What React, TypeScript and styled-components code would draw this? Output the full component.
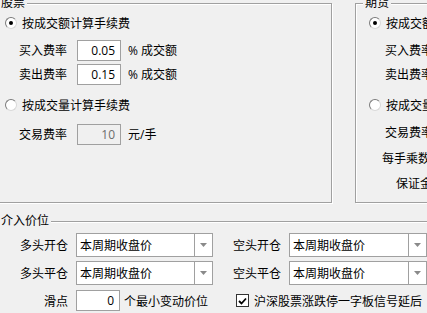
import styled, { createGlobalStyle } from "styled-components";

const GlobalStyle = createGlobalStyle`
  html, body {
    margin: 0;
    padding: 0;
    background: #f0f0f0;
  }
`;

const Page = styled.div`
  width: 427px;
  height: 313px;
  overflow: hidden;
  background: #f0f0f0;
  color: #000;
  font-family: "Open Sans", "Noto Sans CJK SC", sans-serif;
  font-size: 12px;
`;

const TopRow = styled.div`
  display: flex;
  gap: 23px;
  margin: 3px 0 0 -9px;
`;

const Group = styled.section<{ $width: number; $height: number }>`
  position: relative;
  box-sizing: border-box;
  flex-shrink: 0;
  width: ${(p) => p.$width}px;
  height: ${(p) => p.$height}px;
  border: 1px solid #a0a0a0;
  box-shadow: 1px 1px 0 #fff, inset 1px 1px 0 #fff;
`;

const Legend = styled.span`
  position: absolute;
  top: -8px;
  left: 7px;
  padding: 0 2px;
  line-height: 14px;
  background: #f0f0f0;
  white-space: nowrap;
`;

const Stack = styled.div`
  display: flex;
  flex-direction: column;
  padding: 7px 0 0 13px;
`;

const RadioRow = styled.label<{ $top?: number }>`
  display: flex;
  align-items: center;
  gap: 5px;
  height: 24px;
  margin-top: ${(p) => p.$top ?? 0}px;
  white-space: nowrap;
`;

const Radio = styled.span<{ $checked?: boolean }>`
  display: flex;
  align-items: center;
  justify-content: center;
  box-sizing: border-box;
  width: 12px;
  height: 12px;
  flex-shrink: 0;
  border-radius: 50%;
  border: 1px solid;
  border-color: #7a7a7a #d8d8d8 #d8d8d8 #7a7a7a;
  background: #fff;

  &::after {
    content: "";
    display: ${(p) => (p.$checked ? "block" : "none")};
    width: 4px;
    height: 4px;
    border-radius: 50%;
    background: #000;
  }
`;

const FieldRow = styled.div<{ $indent: number; $top?: number }>`
  display: flex;
  align-items: center;
  height: 24px;
  padding-left: ${(p) => p.$indent}px;
  margin-top: ${(p) => p.$top ?? 0}px;
  white-space: nowrap;
`;

const FieldLabel = styled.span`
  margin-right: 10px;
`;

const NumberBox = styled.span<{ $width?: number; $disabled?: boolean }>`
  display: flex;
  align-items: center;
  justify-content: flex-end;
  box-sizing: border-box;
  flex-shrink: 0;
  width: ${(p) => p.$width ?? 44}px;
  height: 21px;
  padding-right: 5px;
  border: 1px solid #a0a0a0;
  background: ${(p) => (p.$disabled ? "#f0f0f0" : "#fff")};
  color: ${(p) => (p.$disabled ? "#6d6d6d" : "#000")};
`;

const Unit = styled.span<{ $gap?: number }>`
  margin-left: ${(p) => p.$gap ?? 7}px;
  white-space: nowrap;
`;

const BottomGroup = styled(Group)`
  margin: 18px 0 0 -9px;
`;

const EntryGrid = styled.div`
  display: grid;
  grid-template-columns: 68px 137px 60px 138px;
  grid-template-rows: 24px 24px 23px;
  column-gap: 8px;
  row-gap: 4px;
  padding: 11px 0 0 8px;
`;

const GridLabel = styled.span`
  align-self: center;
  justify-self: end;
  white-space: nowrap;
`;

const Combo = styled.div`
  display: flex;
  box-sizing: border-box;
  height: 24px;
  border: 1px solid #a0a0a0;
  background: #fff;
`;

const ComboValue = styled.span`
  flex: 1;
  display: flex;
  align-items: center;
  padding-left: 3px;
  white-space: nowrap;
`;

const ComboArrow = styled.span`
  display: flex;
  align-items: center;
  justify-content: center;
  width: 17px;
  border-left: 1px solid #a0a0a0;
`;

const Inline = styled.div`
  display: flex;
  align-items: center;
`;

const CheckRow = styled.label`
  grid-column: 3 / span 2;
  display: flex;
  align-items: center;
  gap: 5px;
  padding-left: 15px;
  white-space: nowrap;
`;

const CheckBox = styled.span`
  display: flex;
  align-items: center;
  justify-content: center;
  box-sizing: border-box;
  width: 13px;
  height: 13px;
  border: 1px solid #333;
  background: #fff;
`;

const Select = ({ value }: { value: string }) => (
  <Combo>
    <ComboValue>{value}</ComboValue>
    <ComboArrow>
      <svg width="7" height="4" viewBox="0 0 7 4">
        <polygon points="0,0 7,0 3.5,4" fill="#8a8a8a" />
      </svg>
    </ComboArrow>
  </Combo>
);

const App = () => (
  <Page>
    <GlobalStyle />
    <TopRow>
      <Group $width={341} $height={200}>
        <Legend>股票</Legend>
        <Stack>
          <RadioRow>
            <Radio $checked />
            按成交额计算手续费
          </RadioRow>
          <FieldRow $indent={14} $top={3}>
            <FieldLabel>买入费率</FieldLabel>
            <NumberBox>0.05</NumberBox>
            <Unit>% 成交额</Unit>
          </FieldRow>
          <FieldRow $indent={14}>
            <FieldLabel>卖出费率</FieldLabel>
            <NumberBox>0.15</NumberBox>
            <Unit>% 成交额</Unit>
          </FieldRow>
          <RadioRow $top={7}>
            <Radio />
            按成交量计算手续费
          </RadioRow>
          <FieldRow $indent={14} $top={5}>
            <FieldLabel>交易费率</FieldLabel>
            <NumberBox $disabled>10</NumberBox>
            <Unit>元/手</Unit>
          </FieldRow>
        </Stack>
      </Group>

      <Group $width={120} $height={200}>
        <Legend>期货</Legend>
        <Stack>
          <RadioRow>
            <Radio $checked />
            按成交额计算手续费
          </RadioRow>
          <FieldRow $indent={16} $top={3}>
            <FieldLabel>买入费率</FieldLabel>
            <NumberBox>0.01</NumberBox>
          </FieldRow>
          <FieldRow $indent={16}>
            <FieldLabel>卖出费率</FieldLabel>
            <NumberBox>0.01</NumberBox>
          </FieldRow>
          <RadioRow $top={7}>
            <Radio />
            按成交量计算手续费
          </RadioRow>
          <FieldRow $indent={16} $top={3}>
            <FieldLabel>交易费率</FieldLabel>
            <NumberBox $disabled>10</NumberBox>
          </FieldRow>
          <FieldRow $indent={13} $top={2}>
            <FieldLabel>每手乘数</FieldLabel>
            <NumberBox>10</NumberBox>
          </FieldRow>
          <FieldRow $indent={27} $top={1}>
            <FieldLabel>保证金率</FieldLabel>
            <NumberBox>10</NumberBox>
          </FieldRow>
        </Stack>
      </Group>
    </TopRow>

    <BottomGroup $width={460} $height={120}>
      <Legend>介入价位</Legend>
      <EntryGrid>
        <GridLabel>多头开仓</GridLabel>
        <Select value="本周期收盘价" />
        <GridLabel>空头开仓</GridLabel>
        <Select value="本周期收盘价" />

        <GridLabel>多头平仓</GridLabel>
        <Select value="本周期收盘价" />
        <GridLabel>空头平仓</GridLabel>
        <Select value="本周期收盘价" />

        <GridLabel>滑点</GridLabel>
        <Inline>
          <NumberBox>0</NumberBox>
          <Unit $gap={4}>个最小变动价位</Unit>
        </Inline>
        <CheckRow>
          <CheckBox>
            <svg width="9" height="8" viewBox="0 0 9 8">
              <path d="M1 4 L3.5 6.5 L8 1.5" fill="none" stroke="#000" strokeWidth="1.8" />
            </svg>
          </CheckBox>
          沪深股票涨跌停一字板信号延后
        </CheckRow>
      </EntryGrid>
    </BottomGroup>
  </Page>
);

export default App;
